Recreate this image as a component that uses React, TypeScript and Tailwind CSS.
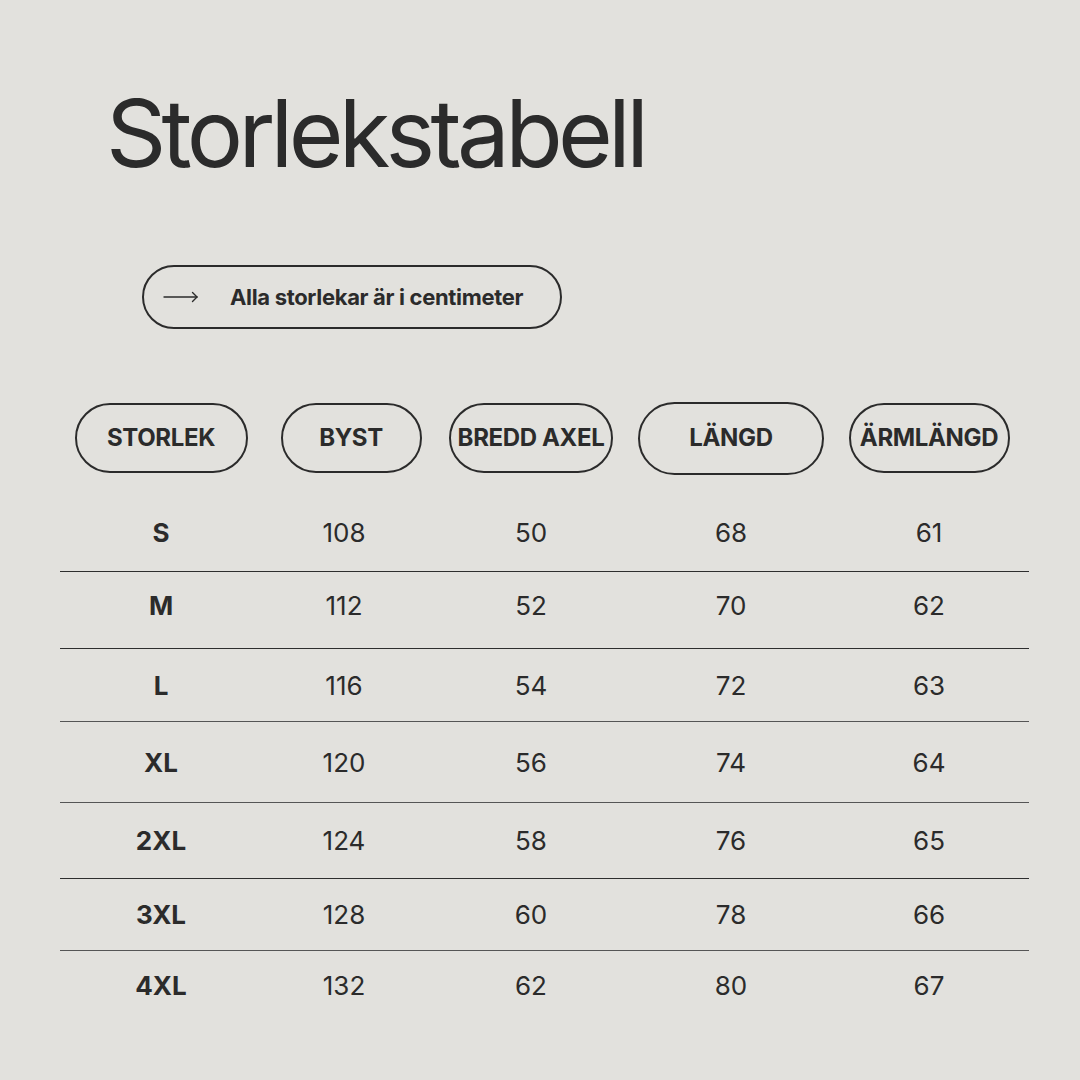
import React from 'react';

const headers = [
  { label: 'STORLEK', w: 'w-[173px] h-[70px]' },
  { label: 'BYST', w: 'w-[141px] h-[70px]' },
  { label: 'BREDD AXEL', w: 'w-[164px] h-[70px]' },
  { label: 'LÄNGD', w: 'w-[186px] h-[73px]' },
  { label: 'ÄRMLÄNGD', w: 'w-[161px] h-[70px]' },
];

const rows = [
  { size: 'S', values: ['108', '50', '68', '61'], h: 'h-[78px]' },
  { size: 'M', values: ['112', '52', '70', '62'], h: 'h-[77px] pb-[9px] border-t border-[#2e2e2e]' },
  { size: 'L', values: ['116', '54', '72', '63'], h: 'h-[73px] border-t border-[#2e2e2e]' },
  { size: 'XL', values: ['120', '56', '74', '64'], h: 'h-[81px] border-t border-[#555]' },
  { size: '2XL', values: ['124', '58', '76', '65'], h: 'h-[76px] border-t border-[#555]' },
  { size: '3XL', values: ['128', '60', '78', '66'], h: 'h-[72px] border-t border-[#2e2e2e]' },
  { size: '4XL', values: ['132', '62', '80', '67'], h: 'h-[70px] border-t border-[#555]' },
];

const cols = 'grid grid-cols-[202px_178px_182px_218px_178px] items-center';

export default function App() {
  return (
    <div className="w-[1080px] h-[1080px] bg-[#e2e1dd] text-[#2b2b2b] font-['Inter',sans-serif] overflow-hidden">
      {/* Title */}
      <h1 className="pt-[86px] pl-[106px] text-[94px] leading-none font-normal tracking-[-0.05em]">Storlekstabell</h1>

      {/* Unit note */}
      <div className="mt-[85px] ml-[142px] w-[420px] h-[64px] rounded-full border-2 border-[#2b2b2b] flex items-center pl-[19px]">
        <svg width="36" height="12" viewBox="0 0 36 12" fill="none" stroke="#2b2b2b" strokeWidth="1.4" strokeLinecap="round">
          <path d="M1 6 H34" />
          <path d="M29.5 1.5 L34 6 L29.5 10.5" />
        </svg>
        <span className="ml-[31px] text-[22px] font-bold tracking-[-0.015em]">Alla storlekar är i centimeter</span>
      </div>

      {/* Table */}
      <div className="ml-[60px] w-[969px] mt-[72px]">
        <div className={`${cols} h-[74px]`}>
          {headers.map((h) => (
            <div key={h.label} className="flex justify-center">
              <div className={`${h.w} rounded-full border-2 border-[#2b2b2b] flex items-center justify-center text-[24px] font-bold whitespace-nowrap tracking-[-0.015em]`}>
                {h.label}
              </div>
            </div>
          ))}
        </div>

        <div className="mt-[18px]">
          {rows.map((r) => (
            <div key={r.size} className={`${cols} ${r.h} w-[969px]`}>
              <div className="text-center text-[26px] font-bold">{r.size}</div>
              {r.values.map((v, i) => (
                <div key={i} className={`text-center text-[26px] font-normal ${i === 0 ? 'pr-[14px]' : ''}`}>
                  {v}
                </div>
              ))}
            </div>
          ))}
        </div>
      </div>
    </div>
  );
}
